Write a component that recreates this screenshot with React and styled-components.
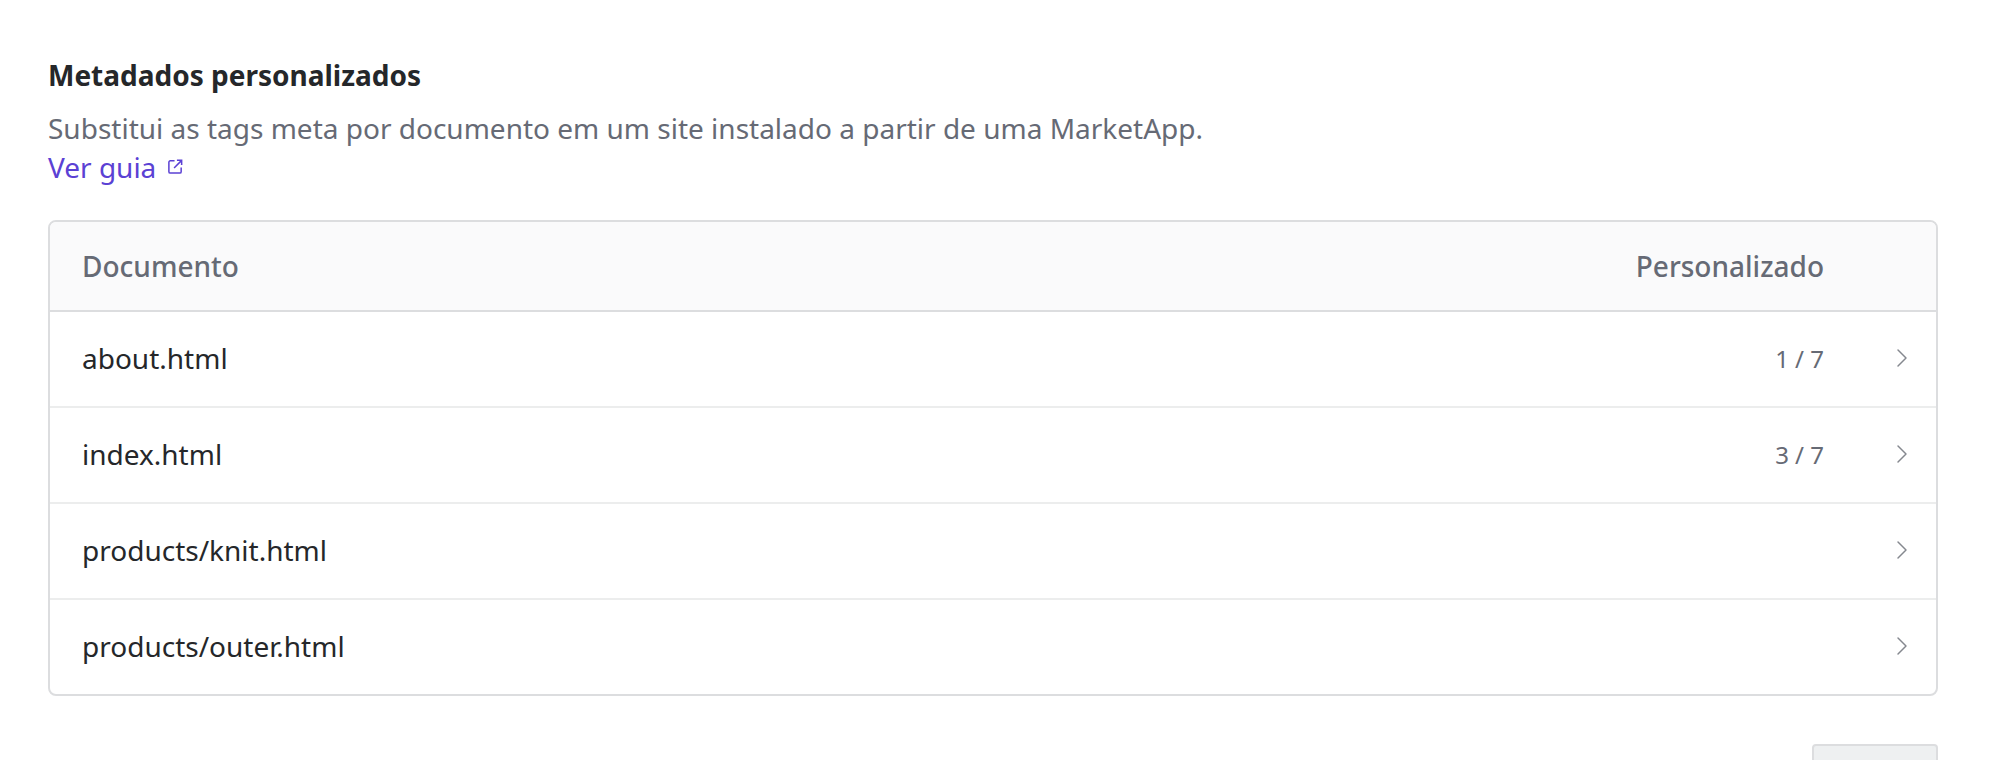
import React from 'react';
import styled, { createGlobalStyle } from 'styled-components';
import { ChevronRight } from 'lucide-react';

const Global = createGlobalStyle`
  html, body {
    margin: 0;
    padding: 0;
    background: #fff;
    overflow: hidden;
  }
  body {
    font-family: "Noto Sans", "Liberation Sans", sans-serif;
  }
`;

const Page = styled.div`
  width: 2000px;
  height: 760px;
  box-sizing: border-box;
  padding: 57px 62px 0 48px;
  overflow: hidden;
`;

const Title = styled.h2`
  margin: 0;
  font-size: 28px;
  line-height: 36px;
  font-weight: 700;
  color: #25272a;
`;

const Description = styled.p`
  margin: 15px 0 0;
  font-size: 28px;
  line-height: 40px;
  color: #666a75;
`;

const GuideLink = styled.a`
  display: inline-flex;
  align-items: center;
  gap: 11px;
  font-size: 28px;
  line-height: 39px;
  color: #5b41d4;
  text-decoration: none;
`;

const LinkIcon = styled.svg`
  width: 17px;
  height: 17px;
  margin-top: -3px;
`;

const Table = styled.div`
  margin-top: 33px;
  border: 2px solid #dcdddf;
  border-radius: 8px;
  overflow: hidden;
`;

const HeadRow = styled.div`
  display: flex;
  align-items: center;
  justify-content: space-between;
  height: 88px;
  padding: 0 112px 0 32px;
  background: #fafafb;
  border-bottom: 2px solid #dcdddf;
  font-size: 28px;
  font-weight: 500;
  color: #666a75;
`;

const Row = styled.div`
  display: flex;
  align-items: center;
  box-sizing: content-box;
  height: 92px;
  padding: 0 18px 2px 32px;
  border-bottom: ${({ $last }) => ($last ? 'none' : '2px solid #eceded')};
`;

const DocName = styled.span`
  flex: 1;
  font-size: 28px;
  color: #25272a;
`;

const Count = styled.span`
  font-size: 24px;
  color: #666a75;
  margin-right: 62px;
`;

const Chevron = styled(ChevronRight)`
  width: 32px;
  height: 32px;
  color: #85888f;
  flex-shrink: 0;
`;

const FooterBar = styled.div`
  display: flex;
  justify-content: flex-end;
  margin-top: 48px;
`;

const SaveButton = styled.div`
  width: 126px;
  height: 60px;
  box-sizing: border-box;
  background: #eef0f1;
  border: 2px solid #dcdddf;
  border-radius: 4px;
`;

const docs = [
  { name: 'about.html', count: '1 / 7' },
  { name: 'index.html', count: '3 / 7' },
  { name: 'products/knit.html' },
  { name: 'products/outer.html' },
];

export default function App() {
  return (
    <Page>
      <Global />
      <Title>Metadados personalizados</Title>
      <Description>Substitui as tags meta por documento em um site instalado a partir de uma MarketApp.</Description>
      <GuideLink href="#">
        Ver guia
        <LinkIcon viewBox="0 0 18 18" fill="none" stroke="currentColor" strokeWidth="1.6">
          <path d="M8 3H3.500A1.500 1.500 0 0 0 2 4.500V14.500A1.500 1.500 0 0 0 3.500 16H13.500A1.500 1.500 0 0 0 15 14.500V10" />
          <path d="M7.500 10.500L15.500 2.500M10.500 2.500H15.500V7.500" />
        </LinkIcon>
      </GuideLink>
      <Table>
        <HeadRow>
          <span>Documento</span>
          <span>Personalizado</span>
        </HeadRow>
        {docs.map((doc, i) => (
          <Row key={doc.name} $last={i === docs.length - 1}>
            <DocName>{doc.name}</DocName>
            {doc.count && <Count>{doc.count}</Count>}
            <Chevron strokeWidth={1.1} />
          </Row>
        ))}
      </Table>
      <FooterBar>
        <SaveButton />
      </FooterBar>
    </Page>
  );
}
